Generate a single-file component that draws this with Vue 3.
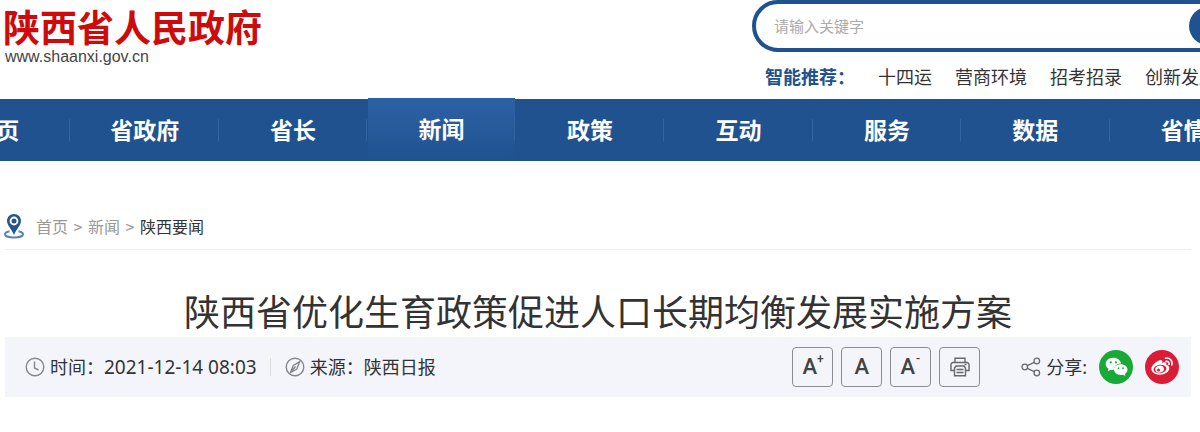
<script setup>
import { ref } from 'vue'

const keyword = ref('')
const hotWords = ['十四运', '营商环境', '招考招录', '创新发展']
const navItems = ['首页', '省政府', '省长', '新闻', '政策', '互动', '服务', '数据', '省情']
const activeItem = '新闻'
</script>

<template>
  <div class="page">
    <header class="header">
      <a class="logo" href="#">
        <span class="logo-name">陕西省人民政府</span>
        <span class="logo-url">www.shaanxi.gov.cn</span>
      </a>
      <div class="search-area">
        <form class="search" @submit.prevent>
          <input v-model="keyword" type="text" placeholder="请输入关键字" aria-label="请输入关键字" />
          <button type="submit" aria-label="搜索"></button>
        </form>
        <div class="hot">
          <strong>智能推荐：</strong>
          <a v-for="word in hotWords" :key="word" href="#">{{ word }}</a>
        </div>
      </div>
    </header>

    <nav class="nav">
      <div class="nav-track">
        <a v-for="item in navItems" :key="item" href="#" :class="{ active: item === activeItem }">{{ item }}</a>
      </div>
    </nav>

    <main class="content">
      <div class="crumbs">
        <svg width="20" height="26" viewBox="0 0 20 26" aria-hidden="true">
          <path d="M5.5 18.2C2.8 18.8 1 19.9 1 21.2c0 1.9 4 3.3 9 3.3s9-1.4 9-3.3c0-1.3-1.8-2.4-4.5-3" fill="none" stroke="#5c82b5" stroke-width="2" />
          <path fill-rule="evenodd" d="M10 1C6 1 3 4 3 7.800c0 4.500 4.500 8.200 7 14.200 2.500-6 7-9.700 7-14.200C17 4 14 1 10 1Zm0 2.600a4.400 4.400 0 1 1 0 8.800 4.400 4.400 0 0 1 0-8.800Z" fill="#24548f" />
          <circle cx="10" cy="8" r="2.500" fill="#24548f" />
        </svg>
        <a href="#">首页</a><i>&gt;</i><a href="#">新闻</a><i>&gt;</i><a class="current" href="#">陕西要闻</a>
      </div>

      <h1>陕西省优化生育政策促进人口长期均衡发展实施方案</h1>

      <div class="meta">
        <div class="meta-item">
          <svg width="20" height="20" viewBox="0 0 20 20" fill="none" stroke="#85878c" stroke-width="1.400" aria-hidden="true">
            <circle cx="10" cy="10" r="8.800" />
            <path d="M9.500 4.500v6.500l4 2" />
          </svg>
          <span>时间：</span><time>2021-12-14 08:03</time>
        </div>
        <div class="meta-item source">
          <svg width="20" height="20" viewBox="0 0 20 20" fill="none" stroke="#85878c" stroke-width="1.400" aria-hidden="true">
            <circle cx="10" cy="10" r="8.800" />
            <path d="M14.800 4.600 11.800 12 5.500 15.500 8.300 8.500ZM5.500 15.500 10.500 9.500" />
          </svg>
          <span>来源：</span><span>陕西日报</span>
        </div>
        <div class="tools">
          <button type="button" aria-label="放大字体">A<sup>+</sup></button>
          <button type="button" aria-label="默认字体">A</button>
          <button type="button" aria-label="缩小字体">A<sup>-</sup></button>
          <button type="button" aria-label="打印">
            <svg width="20" height="20" viewBox="0 0 20 20" fill="none" stroke="#66686d" stroke-width="1.400" aria-hidden="true">
              <path d="M5 5.500V1.200h10v4.300M4.500 13.500H1V7l1.500-1.500h15L19 7v6.500h-3.500" />
              <path d="M6 9h8l1.500 2v7.800h-11V11ZM6.500 12.500h7M6.500 15.500h7M14.500 7.500h2" />
            </svg>
          </button>
        </div>
        <div class="share">
          <svg width="20" height="20" viewBox="0 0 20 20" fill="none" stroke="#696b70" stroke-width="1.300" aria-hidden="true">
            <circle cx="3.800" cy="10" r="2.800" />
            <circle cx="15.800" cy="4" r="2.800" />
            <circle cx="15.800" cy="16" r="2.800" />
            <path d="m6.300 8.700 7-3.400M6.300 11.300l7 3.400" />
          </svg>
          <span>分享:</span>
          <a href="#" aria-label="微信">
            <svg width="34" height="34" viewBox="0 0 34 34" aria-hidden="true">
              <circle cx="17" cy="17" r="17" fill="#18a936" />
              <path d="M14.500 7.800C10 7.800 6.700 10.600 6.700 14c0 2 1.100 3.600 2.800 4.800l-.7 2.400 2.900-1.500c1 .3 1.900.4 3 .4.300-4 3.400-6.600 7.400-6.600-.6-3.400-3.700-5.700-7.600-5.700Z" fill="#fff" />
              <path d="M21.700 14.200c-3.800 0-6.700 2.400-6.700 5.400s2.900 5.400 6.700 5.400c.8 0 1.500-.1 2.200-.3l2.500 1.300-.6-2.100c1.700-1.100 2.700-2.500 2.700-4.300 0-3-3-5.400-6.800-5.400Z" fill="#fff" />
              <g fill="#18a936">
                <circle cx="11.800" cy="12.300" r="1.100" />
                <circle cx="17" cy="12.300" r="1.100" />
                <circle cx="19.500" cy="18.200" r=".9" />
                <circle cx="24" cy="18.200" r=".9" />
              </g>
            </svg>
          </a>
          <a href="#" aria-label="微博">
            <svg width="34" height="34" viewBox="0 0 34 34" aria-hidden="true">
              <circle cx="17" cy="17" r="17" fill="#da1c35" />
              <path d="M14.800 10.300c1.700-.7 3 .1 2.500 2.500 2.500-1 4.700-.6 4 2 2 .7 3 1.800 3 3.500 0 3.400-4.400 6.400-9.600 6.400-4.700 0-8.300-2.300-8.300-5.700 0-3.500 4.500-7.500 8.400-8.700Z" fill="#fff" />
              <ellipse cx="15" cy="19" rx="6.500" ry="4.200" fill="#da1c35" transform="rotate(-8 15 19)" />
              <ellipse cx="14.600" cy="19.200" rx="4.400" ry="3.500" fill="#fff" transform="rotate(-15 14.600 19.200)" />
              <circle cx="13.500" cy="20" r="1.500" fill="#da1c35" />
              <path d="M20.500 8.200c4.300-.8 7.500 2.500 6.300 6.800M21 11.400c2.200-.3 3.500 1 3 3.100" fill="none" stroke="#fff" stroke-width="1.600" stroke-linecap="round" />
            </svg>
          </a>
        </div>
      </div>
    </main>
  </div>
</template>

<style>
body {
  margin: 0;
  background: #fff;
}
</style>

<style scoped>
.page {
  overflow: hidden;
  color: #333;
  font-family: "Noto Sans", "Noto Sans CJK SC", sans-serif;
}
a {
  color: inherit;
  text-decoration: none;
}
svg {
  display: block;
  flex: none;
}
.header {
  display: grid;
  grid-template-columns: 752px 1fr;
  height: 99px;
}
.logo {
  display: flex;
  flex-direction: column;
  padding: 3px 0 0 3px;
}
.logo-name {
  color: #cf0a0a;
  font: 700 37px/46px "Noto Sans CJK SC", sans-serif;
}
.logo-url {
  padding-left: 2px;
  color: #444;
  font: 16px/16px "Liberation Sans", Arial, sans-serif;
}
.search-area {
  min-width: 0;
  margin-right: -40px;
}
.search {
  display: flex;
  align-items: center;
  box-sizing: border-box;
  height: 52px;
  padding: 0 4px 0 18px;
  border: 4px solid #20528f;
  border-radius: 26px;
}
.search input {
  flex: 1;
  min-width: 0;
  padding: 0;
  border: 0;
  outline: 0;
  background: none;
  font: 400 15px/24px "Noto Sans CJK SC", sans-serif;
}
.search input::placeholder {
  color: #aaa;
}
.search button {
  width: 43px;
  height: 38px;
  border: 0;
  border-radius: 19px;
  background: #20528f;
}
.hot {
  display: flex;
  gap: 23px;
  padding: 11px 0 0 13px;
  font: 400 18px/26px "Noto Sans CJK SC", sans-serif;
  white-space: nowrap;
}
.hot strong {
  color: #20528f;
  font-weight: 700;
}
.nav {
  background: #20528f;
}
.nav-track {
  display: grid;
  grid-template-columns: repeat(9, 1fr);
  margin: 0 -58px 0 -78px;
}
.nav a {
  position: relative;
  padding-bottom: 2px;
  color: #fff;
  font: 700 23px/60px "Noto Sans CJK SC", sans-serif;
  text-align: center;
}
.nav a::after {
  content: "";
  position: absolute;
  top: 20px;
  right: 0;
  width: 1px;
  height: 22px;
  background: #34649e;
}
.nav .active {
  margin: -1px 1px 0;
  background: linear-gradient(#2c61a5, #20528f);
}
.content {
  padding: 0 9px 35px 5px;
}
.crumbs {
  display: flex;
  align-items: center;
  height: 33px;
  padding: 48px 0 7px;
  border-bottom: 1px solid #eee;
  color: #999;
  font: 400 16px/24px "Noto Sans CJK SC", sans-serif;
}
.crumbs svg {
  margin: 0 12px 0 -1px;
}
.crumbs i {
  width: 20px;
  font-style: normal;
  text-align: center;
}
.crumbs .current {
  color: #333;
}
h1 {
  margin: 36px 0 3px;
  color: #333;
  font: 400 36px/48px "Noto Sans CJK SC", sans-serif;
  text-align: center;
}
.meta {
  display: flex;
  align-items: center;
  height: 60px;
  padding: 0 12px 0 20px;
  background: #f4f5fb;
  font-size: 18px;
  line-height: 26px;
  white-space: nowrap;
}
.meta-item {
  display: flex;
  align-items: center;
}
.meta-item svg {
  margin-right: 5px;
}
time {
  font-size: 19px;
}
.source {
  margin-left: 13px;
  padding-left: 15px;
  background: linear-gradient(#ddd, #ddd) left center / 1px 18px no-repeat;
}
.tools {
  display: flex;
  gap: 8px;
  margin-left: auto;
}
.tools button {
  display: flex;
  align-items: center;
  justify-content: center;
  box-sizing: border-box;
  width: 41px;
  height: 40px;
  padding: 0;
  border: 1px solid #8b8d92;
  border-radius: 4px;
  background: none;
  color: #444;
  font: 500 22px/24px Roboto, sans-serif;
}
.tools sup {
  align-self: flex-start;
  width: 6px;
  margin-top: 5px;
  font-size: 12px;
  line-height: 12px;
}
.share {
  display: flex;
  align-items: center;
  margin-left: 41px;
}
.share span {
  margin: 0 12px 0 5px;
}
.share a + a {
  margin-left: 12px;
}
</style>
